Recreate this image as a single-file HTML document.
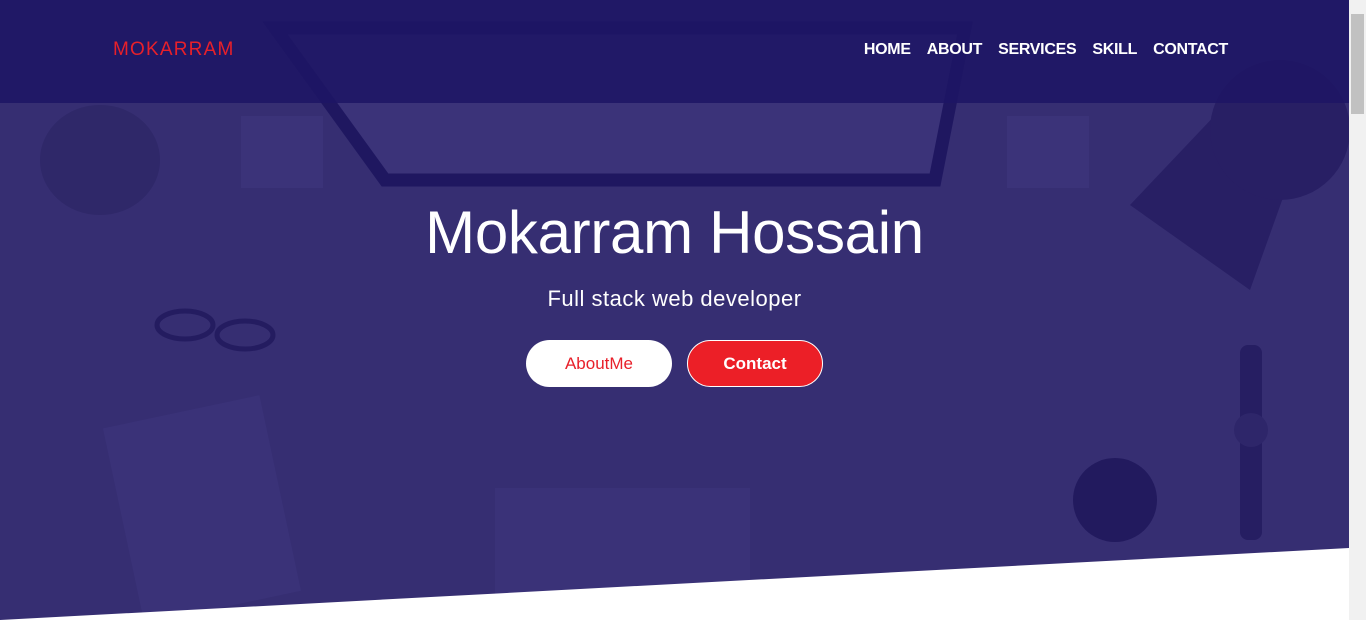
<!DOCTYPE html>
<html><head><meta charset="utf-8"><style>
*{margin:0;padding:0;box-sizing:border-box}
body{width:1366px;height:620px;overflow:hidden;background:#fff;font-family:"Liberation Sans",sans-serif;position:relative}
#hero{position:absolute;left:0;top:0;width:1349px;height:620px;background:#362e72;overflow:hidden}
#nav{position:absolute;left:0;top:0;width:1349px;height:103px;background:rgba(30,22,100,.88)}
.logo{position:absolute;left:113px;top:39px;color:#e8202a;font-size:19px;letter-spacing:1.2px}
.menu{position:absolute;right:121px;top:41px;color:#fff;font-weight:bold;font-size:16px;display:flex;gap:16px;letter-spacing:-0.3px}
h1{position:absolute;left:0;width:1349px;top:198px;text-align:center;color:#fff;font-weight:normal;font-size:60px;letter-spacing:-0.3px}
.sub{position:absolute;left:0;width:1349px;top:286px;text-align:center;color:#fff;font-size:22px;letter-spacing:0.5px}
.btn{position:absolute;top:340px;height:47px;border-radius:24px;font-size:17px;display:flex;align-items:center;justify-content:center}
#sb{position:absolute;right:0;top:0;width:17px;height:620px;background:#f1f1f1}
#sb div{position:absolute;left:2px;top:14px;width:13px;height:100px;background:#c1c1c1}
</style></head><body>
<div id="hero">
<svg width="1349" height="620" style="position:absolute;left:0;top:0">
<path d="M275 28 L965 28 L935 180 L385 180 Z" fill="#3b3379" stroke="#1f1760" stroke-width="13"/>
<rect x="241" y="116" width="82" height="72" fill="#3b3379"/>
<rect x="1007" y="116" width="82" height="72" fill="#3b3379"/>
<ellipse cx="100" cy="160" rx="60" ry="55" fill="#2f2869"/>
<path d="M1130 205 L1220 110 L1300 150 L1250 290 Z" fill="#281f64"/>
<circle cx="1280" cy="130" r="70" fill="#281f64"/>
<rect x="122" y="410" width="160" height="200" transform="rotate(-12 200 510)" fill="#3a3278"/>
<rect x="495" y="488" width="255" height="132" fill="#3a3278"/>
<circle cx="1115" cy="500" r="42" fill="#221a5e"/>
<rect x="1240" y="345" width="22" height="195" rx="8" fill="#261e62"/>
<circle cx="1251" cy="430" r="17" fill="#2e266a"/>
<ellipse cx="185" cy="325" rx="28" ry="14" fill="none" stroke="#241c60" stroke-width="5"/>
<ellipse cx="245" cy="335" rx="28" ry="14" fill="none" stroke="#241c60" stroke-width="5"/>
<polygon points="0,620 1349,548 1349,620" fill="#fff"/>
</svg>
<div id="nav"><div class="logo">MOKARRAM</div>
<div class="menu"><span>HOME</span><span>ABOUT</span><span>SERVICES</span><span>SKILL</span><span>CONTACT</span></div></div>
<h1>Mokarram Hossain</h1>
<div class="sub">Full stack web developer</div>
<div class="btn" style="left:526px;width:146px;background:#fff;color:#e8202a">AboutMe</div>
<div class="btn" style="left:687px;width:136px;background:#ec1f27;color:#fff;font-weight:bold;border:1px solid #fff">Contact</div>
</div>
<div id="sb"><div></div></div>
</body></html>
